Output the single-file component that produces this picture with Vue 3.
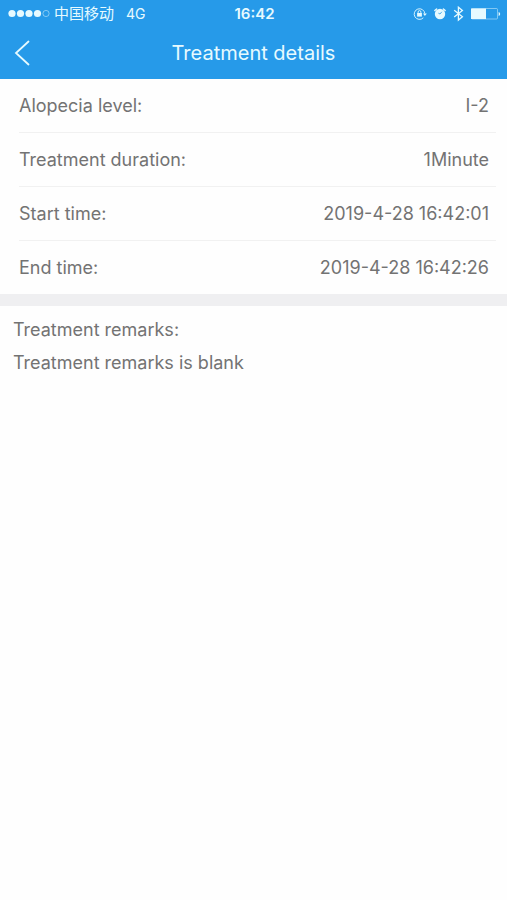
<script setup>
const details = [
  { label: 'Alopecia level:', value: 'I-2' },
  { label: 'Treatment duration:', value: '1Minute' },
  { label: 'Start time:', value: '2019-4-28 16:42:01' },
  { label: 'End time:', value: '2019-4-28 16:42:26' },
]
</script>

<template>
  <div class="screen">
    <header class="header">
      <div class="status">
        <div class="carrier">
          <svg class="signal" width="42" height="10" viewBox="0 0 42 10" aria-hidden="true">
            <circle cx="4" cy="4.5" r="3.6" fill="currentColor" />
            <circle cx="12.5" cy="4.5" r="3.6" fill="currentColor" />
            <circle cx="21" cy="4.5" r="3.6" fill="currentColor" />
            <circle cx="29.5" cy="4.5" r="3.6" fill="currentColor" />
            <circle cx="38" cy="4.5" r="3.1" fill="none" stroke="currentColor" stroke-width="0.8" opacity="0.6" />
          </svg>
          <span>中国移动</span>
          <span class="network">4G</span>
        </div>
        <span class="clock">16:42</span>
        <div class="indicators">
          <svg width="14" height="14" viewBox="0 0 14 14" fill="none" stroke="currentColor" aria-hidden="true">
            <path d="M10.3 10.8A5.3 5.3 0 1 1 11.8 6.6" stroke-width="0.9" />
            <path d="M10 6.4h3.8L11.9 9z" fill="currentColor" stroke="none" />
            <rect x="4.1" y="6" width="4.8" height="3.6" fill="currentColor" stroke="none" />
            <path d="M5.1 6.2V5a1.4 1.4 0 0 1 2.8 0v1.2" stroke-width="0.9" />
          </svg>
          <svg width="14" height="14" viewBox="0 0 14 14" aria-hidden="true">
            <circle cx="7" cy="7" r="5.2" fill="currentColor" />
            <path d="M1.8 3.6 3.6 2M10.4 2l1.8 1.6" stroke="currentColor" stroke-width="1.4" stroke-linecap="round" />
            <path d="M8.8 4.8 7 7 5.4 6.2" fill="none" stroke="#269ae9" stroke-width="0.8" />
          </svg>
          <svg width="12" height="16" viewBox="0 0 12 16" fill="none" stroke="currentColor" stroke-width="1.3" aria-hidden="true">
            <path d="M1.2 4.2 9.4 10.8 5.4 14.1V1.2l4 3.3-8.2 6.6" />
          </svg>
          <svg class="battery" width="30" height="14" viewBox="0 0 30 14" aria-hidden="true">
            <rect x="0.5" y="1.5" width="26" height="10.5" rx="1" fill="none" stroke="currentColor" stroke-width="0.8" opacity="0.6" />
            <rect x="0" y="1.5" width="15" height="10.5" fill="currentColor" />
            <path d="M27.6 5v4q1.6-.5 1.6-2t-1.6-2z" fill="currentColor" />
          </svg>
        </div>
      </div>
      <nav class="bar">
        <button class="back" type="button" aria-label="Back">
          <svg width="16" height="26" viewBox="0 0 16 26" fill="none" stroke="currentColor" stroke-width="1.8" stroke-linecap="round" aria-hidden="true">
            <path d="M14.5 1.5 2 13 14.5 24.5" />
          </svg>
        </button>
        <h1 class="title">Treatment details</h1>
      </nav>
    </header>
    <main>
      <dl class="details">
        <div v-for="item in details" :key="item.label" class="row">
          <dt>{{ item.label }}</dt>
          <dd>{{ item.value }}</dd>
        </div>
      </dl>
      <section class="remarks">
        <h2>Treatment remarks:</h2>
        <p>Treatment remarks is blank</p>
      </section>
    </main>
  </div>
</template>

<style>
body {
  margin: 0;
  background: #fefefe;
}
</style>

<style scoped>
.screen {
  min-height: 100vh;
  background: #fefefe;
  color: #737373;
  font-family: Inter, "Noto Sans CJK SC", sans-serif;
  font-size: 18px;
  line-height: 24px;
}
.header {
  background: #269ae9;
  color: #e6faff;
}
.status {
  display: grid;
  grid-template-columns: 1fr auto 1fr;
  align-items: center;
  height: 27px;
  padding: 0 6px 0 8px;
  font-size: 15px;
}
.carrier {
  display: flex;
  align-items: center;
  gap: 4px;
}
.carrier .network {
  margin-left: 8px;
  font-size: 14px;
}
.clock {
  font-weight: 600;
}
.indicators {
  display: flex;
  align-items: center;
  justify-content: flex-end;
  gap: 6px;
}
.bar {
  display: grid;
  grid-template-columns: 44px 1fr 44px;
  align-items: center;
  height: 52px;
}
.back {
  display: flex;
  align-items: center;
  height: 44px;
  padding: 0 0 0 14px;
  border: 0;
  background: none;
  color: inherit;
  cursor: pointer;
}
.title {
  margin: 0;
  font-size: 20px;
  font-weight: 400;
  text-align: center;
}
.details {
  margin: 0;
  padding: 0 11px 0 19px;
  border-bottom: 12px solid #efeff1;
}
.row {
  display: flex;
  align-items: center;
  justify-content: space-between;
  height: 53px;
  padding-right: 7px;
}
.row + .row {
  border-top: 1px solid #f1f1f1;
}
dd {
  margin: 0;
}
.remarks {
  padding: 12px 13px;
}
.remarks h2,
.remarks p {
  margin: 0;
  font-size: 18px;
  font-weight: 400;
}
.remarks p {
  margin-top: 9px;
}
</style>
